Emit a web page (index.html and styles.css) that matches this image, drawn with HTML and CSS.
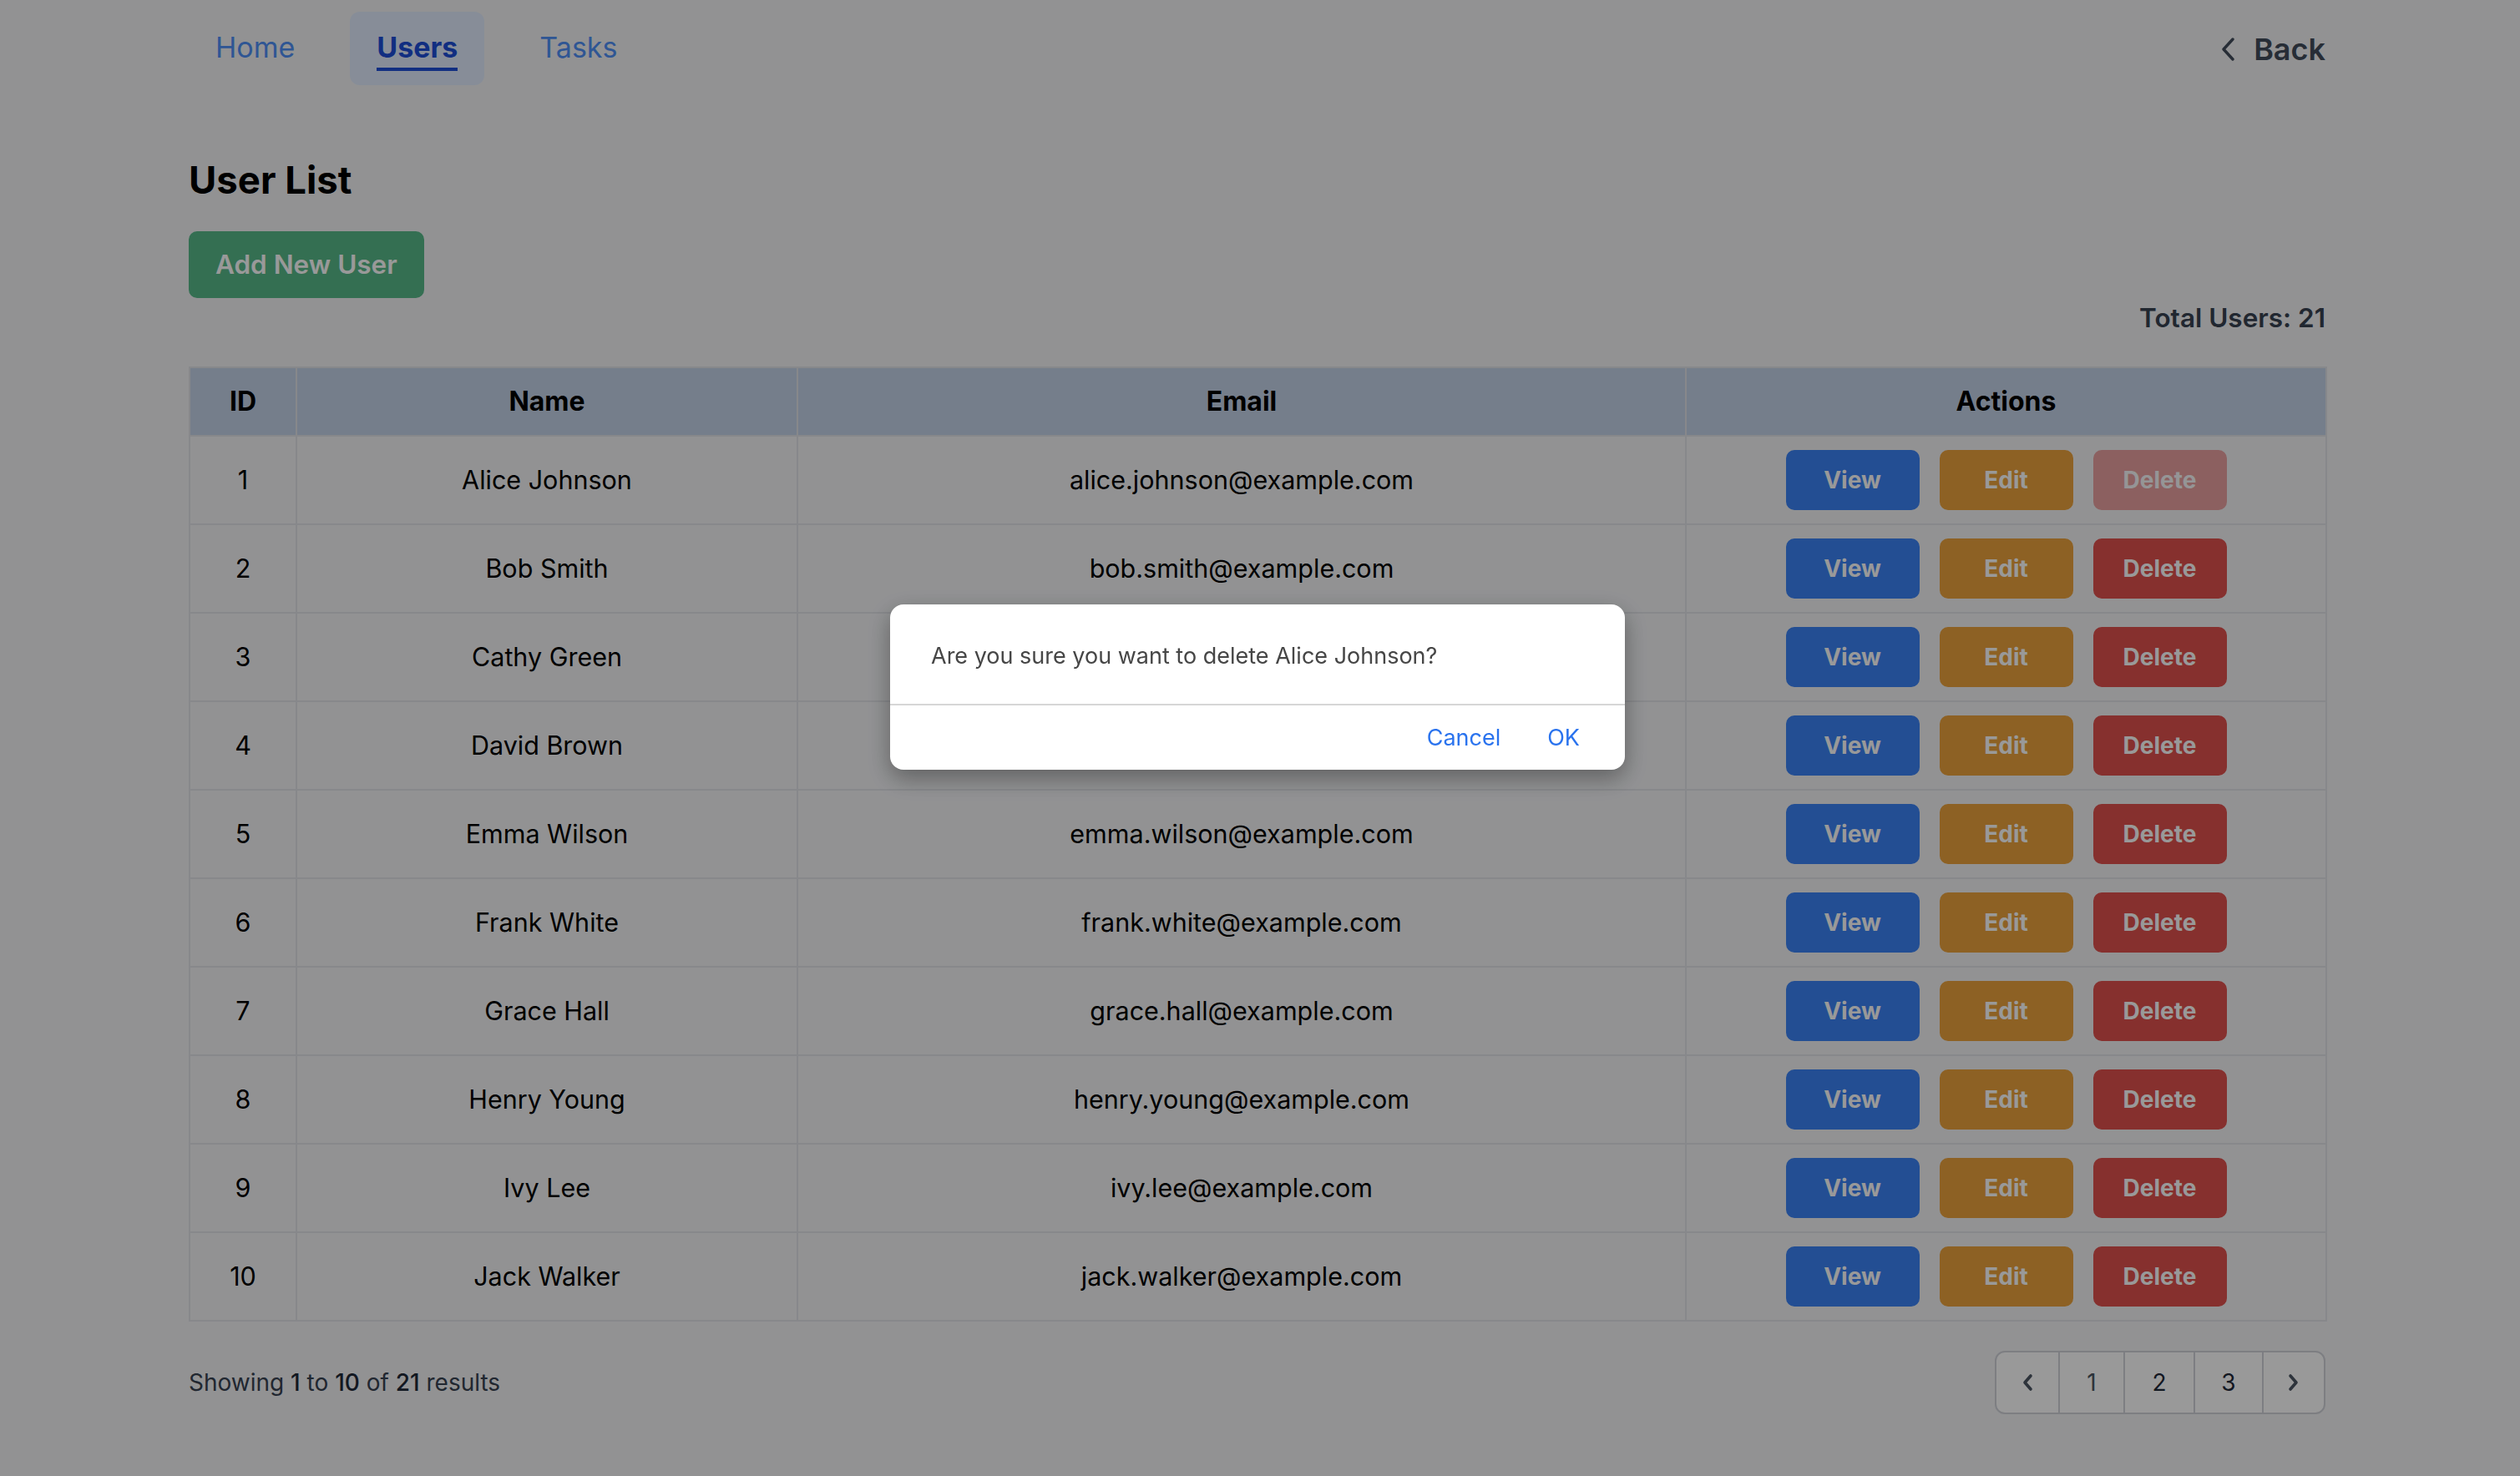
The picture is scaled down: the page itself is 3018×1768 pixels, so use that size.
FILE: index.html
```html
<!DOCTYPE html>
<html lang="en">
<head>
<meta charset="utf-8">
<title>User List</title>
<link rel="stylesheet" href="styles.css">
</head>
<body>
<div class="page">
  <header class="topnav">
    <nav class="links">
      <a class="link"><span class="link-text">Home</span></a>
      <a class="link active"><span class="link-text">Users</span></a>
      <a class="link"><span class="link-text">Tasks</span></a>
    </nav>
    <a class="back">
      <svg class="back-icon" viewBox="0 0 17 28" width="17" height="28"><path d="M14 2 L3 14 L14 26" fill="none" stroke="currentColor" stroke-width="3.4" stroke-linecap="round" stroke-linejoin="round"/></svg>
      <span>Back</span>
    </a>
  </header>

  <main class="content">
    <h1 class="title">User List</h1>
    <button class="btn-add">Add New User</button>
    <div class="total-row"><span class="total">Total Users: 21</span></div>

    <table class="users">
      <colgroup>
        <col class="c-id"><col class="c-name"><col class="c-email"><col class="c-actions">
      </colgroup>
      <thead>
        <tr><th>ID</th><th>Name</th><th>Email</th><th>Actions</th></tr>
      </thead>
      <tbody>
        <tr><td>1</td><td>Alice Johnson</td><td>alice.johnson@example.com</td><td><div class="acts"><button class="b b-view">View</button><button class="b b-edit">Edit</button><button class="b b-del disabled">Delete</button></div></td></tr>
        <tr><td>2</td><td>Bob Smith</td><td>bob.smith@example.com</td><td><div class="acts"><button class="b b-view">View</button><button class="b b-edit">Edit</button><button class="b b-del">Delete</button></div></td></tr>
        <tr><td>3</td><td>Cathy Green</td><td>cathy.green@example.com</td><td><div class="acts"><button class="b b-view">View</button><button class="b b-edit">Edit</button><button class="b b-del">Delete</button></div></td></tr>
        <tr><td>4</td><td>David Brown</td><td>david.brown@example.com</td><td><div class="acts"><button class="b b-view">View</button><button class="b b-edit">Edit</button><button class="b b-del">Delete</button></div></td></tr>
        <tr><td>5</td><td>Emma Wilson</td><td>emma.wilson@example.com</td><td><div class="acts"><button class="b b-view">View</button><button class="b b-edit">Edit</button><button class="b b-del">Delete</button></div></td></tr>
        <tr><td>6</td><td>Frank White</td><td>frank.white@example.com</td><td><div class="acts"><button class="b b-view">View</button><button class="b b-edit">Edit</button><button class="b b-del">Delete</button></div></td></tr>
        <tr><td>7</td><td>Grace Hall</td><td>grace.hall@example.com</td><td><div class="acts"><button class="b b-view">View</button><button class="b b-edit">Edit</button><button class="b b-del">Delete</button></div></td></tr>
        <tr><td>8</td><td>Henry Young</td><td>henry.young@example.com</td><td><div class="acts"><button class="b b-view">View</button><button class="b b-edit">Edit</button><button class="b b-del">Delete</button></div></td></tr>
        <tr><td>9</td><td>Ivy Lee</td><td>ivy.lee@example.com</td><td><div class="acts"><button class="b b-view">View</button><button class="b b-edit">Edit</button><button class="b b-del">Delete</button></div></td></tr>
        <tr><td>10</td><td>Jack Walker</td><td>jack.walker@example.com</td><td><div class="acts"><button class="b b-view">View</button><button class="b b-edit">Edit</button><button class="b b-del">Delete</button></div></td></tr>
      </tbody>
    </table>

    <div class="footer">
      <p class="showing">Showing <b>1</b> to <b>10</b> of <b>21</b> results</p>
      <div class="pager">
        <span class="pg pg-arrow muted"><svg viewBox="0 0 14 22" width="14" height="22"><path d="M11 3 L4 11 L11 19" fill="none" stroke="currentColor" stroke-width="3.6" stroke-linecap="round" stroke-linejoin="round"/></svg></span>
        <span class="pg muted">1</span>
        <span class="pg">2</span>
        <span class="pg">3</span>
        <span class="pg pg-arrow"><svg viewBox="0 0 14 22" width="14" height="22"><path d="M3 3 L10 11 L3 19" fill="none" stroke="currentColor" stroke-width="3.6" stroke-linecap="round" stroke-linejoin="round"/></svg></span>
      </div>
    </div>
  </main>
</div>

<div class="overlay"></div>
<div class="dialog" role="dialog">
  <div class="dialog-body">Are you sure you want to delete Alice Johnson?</div>
  <div class="dialog-actions">
    <button class="dbtn">Cancel</button>
    <button class="dbtn">OK</button>
  </div>
</div>
</body>
</html>
```

FILE: styles.css
```css
* { box-sizing: border-box; }
html, body { margin: 0; padding: 0; }
body {
  background: #f3f4f6;
  font-family: Inter, "Noto Sans", "Liberation Sans", sans-serif;
  color: #000;
  width: 3018px;
  height: 1768px;
  overflow: hidden;
}
.page {
  width: 2559px;
  margin: 0 0 0 226px;
}
.topnav {
  display: flex;
  justify-content: space-between;
  align-items: center;
  padding-top: 14px;
}
.links { display: flex; gap: 34px; }
.link {
  display: block;
  padding: 19px 32px 17px;
  border-radius: 12px;
  font-size: 34px;
  color: #4f8ff7;
  cursor: pointer;
}
.link-text {
  display: block;
  line-height: 48px;
  border-bottom: 4px solid transparent;
}
.link.active {
  background: #e1ecfd;
  color: #1d4ed8;
  font-weight: 700;
}
.link.active .link-text { border-bottom-color: #1d4ed8; }
.back {
  display: flex;
  align-items: center;
  gap: 22px;
  font-size: 36px;
  font-weight: 600;
  color: #414b5a;
  line-height: 56px;
  padding-top: 2px;
}
.back-icon { display: block; }

.content { padding-top: 82px; }
.title {
  margin: 0 0 29px;
  font-size: 45.5px;
  line-height: 64px;
  font-weight: 700;
}
.btn-add {
  display: block;
  font-family: inherit;
  border: none;
  background: #57b989;
  color: #fff;
  font-size: 31.5px;
  font-weight: 600;
  line-height: 48px;
  padding: 16px 32px;
  border-radius: 10px;
}
.total-row { display: flex; justify-content: flex-end; margin-bottom: 34px; }
.total {
  font-size: 31.5px;
  font-weight: 600;
  line-height: 48px;
  color: #374151;
}

.users {
  width: 100%;
  table-layout: fixed;
  border-collapse: collapse;
}
.c-id { width: 128px; }
.c-name { width: 600px; }
.c-email { width: 1064px; }
.c-actions { width: 767px; }
.users th, .users td {
  border: 2px solid #e1e3e8;
  text-align: center;
  font-size: 32px;
  line-height: 48px;
  padding: 16px;
}
.users th {
  background: #c4d2e8;
  font-weight: 700;
}
.users td { line-height: 72px; font-size: 30.5px; }
.acts { display: flex; justify-content: center; gap: 24px; }
.b {
  width: 160px;
  height: 72px;
  border: none;
  border-radius: 10px;
  color: #fff;
  font-family: inherit;
  font-size: 28px;
  font-weight: 700;
  line-height: 40px;
  padding: 0;
}
.b-view { background: #3b82f6; }
.b-edit { background: #eca23c; }
.b-del { background: #e0504d; }
.b-del.disabled { opacity: 0.5; }

.footer {
  display: flex;
  justify-content: space-between;
  align-items: center;
  margin-top: 35px;
}
.showing {
  margin: 0;
  font-size: 28px;
  line-height: 40px;
  color: #374151;
}
.showing b { font-weight: 500; color: #1f2937; }
.pager {
  display: flex;
  border: 2px solid #d0d2d9;
  border-radius: 12px;
  overflow: hidden;
  background: #fff;
}
.pg {
  display: flex;
  align-items: center;
  justify-content: center;
  height: 72px;
  padding: 0 32px;
  font-size: 28px;
  color: #1f2937;
  border-left: 2px solid #d0d2d9;
}
.pg:first-child { border-left: none; }
.pg-arrow { width: 74px; padding: 0; color: #4b5563; }
.pg.muted { color: #4b5563; }
.pg:nth-child(2) { width: 78px; padding: 0; }
.pg:nth-child(3) { width: 84px; padding: 0; }
.pg:nth-child(4) { width: 82px; padding: 0; }
.pg svg { display: block; }

.overlay {
  position: fixed;
  inset: 0;
  background: rgba(0, 0, 0, 0.4);
}
.dialog {
  position: fixed;
  top: 724px;
  left: calc(50% - 443px);
  width: 880px;
  background: #fff;
  border-radius: 16px;
  box-shadow: 0 10px 28px rgba(0, 0, 0, 0.35);
  font-family: Inter, "Liberation Sans", sans-serif;
}
.dialog-body {
  padding: 42px 49px 37px;
  font-size: 27px;
  line-height: 40px;
  color: #464646;
  border-bottom: 2px solid #d6d6d6;
}
.dialog-actions {
  display: flex;
  justify-content: flex-end;
  gap: 56px;
  padding: 19px 54px 18px;
}
.dbtn {
  border: none;
  background: none;
  padding: 0;
  font-family: inherit;
  font-size: 27px;
  line-height: 40px;
  color: #2a73ee;
}
```
